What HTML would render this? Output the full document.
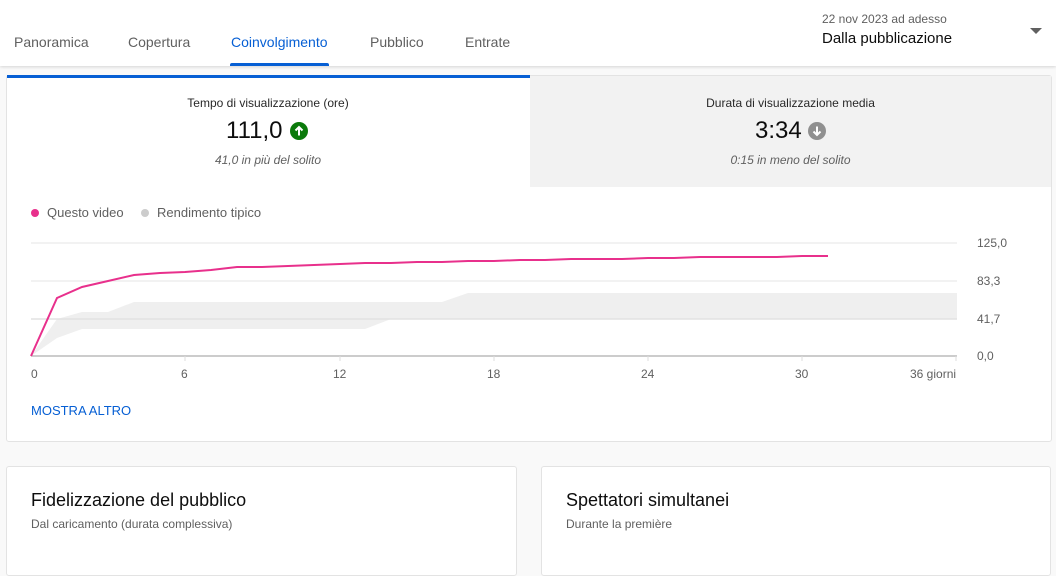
<!DOCTYPE html>
<html><head><meta charset="utf-8"><style>
*{margin:0;padding:0;box-sizing:border-box}
body{width:1056px;height:561px;background:#f9f9f9;font-family:"Liberation Sans",Roboto,sans-serif;position:relative;overflow:hidden;color:#0d0d0d}
.a{position:absolute;white-space:nowrap}
.hdr{position:absolute;left:0;top:0;width:1056px;height:66px;background:#fff;box-shadow:0 1px 3px rgba(0,0,0,.15)}
.tab{position:absolute;top:34px;font-size:14px;color:#606060}
.card{position:absolute;background:#fff;border:1px solid #e3e3e3;border-radius:3px}
</style></head><body>
<div class="hdr">
<div class="tab" style="left:14px">Panoramica</div>
<div class="tab" style="left:128px">Copertura</div>
<div class="tab" style="left:231px;color:#065fd4">Coinvolgimento</div>
<div class="tab" style="left:370px">Pubblico</div>
<div class="tab" style="left:465px">Entrate</div>
<div class="a" style="left:230px;top:63px;width:99px;height:3px;background:#065fd4;border-radius:2px 2px 0 0"></div>
<div class="a" style="left:822px;top:12px;font-size:12px;color:#606060">22 nov 2023 ad adesso</div>
<div class="a" style="left:822px;top:30px;font-size:15px;color:#0d0d0d">Dalla pubblicazione</div>
<div class="a" style="left:1030px;top:28px;width:0;height:0;border-left:6px solid transparent;border-right:6px solid transparent;border-top:6px solid #606060"></div>
</div>

<div class="card" style="left:6px;top:75px;width:1046px;height:367px"></div>
<div class="a" style="left:530px;top:76px;width:521px;height:111px;background:#f2f2f2"></div>
<div class="a" style="left:7px;top:75px;width:523px;height:3px;background:#065fd4"></div>

<div class="a" style="left:0;width:536px;top:96px;text-align:center;font-size:12px;color:#282828">Tempo di visualizzazione (ore)</div>
<div class="a" style="left:226px;top:117px;font-size:24px;color:#0d0d0d">111,0</div>
<div class="a" style="left:290px;top:122px;width:18px;height:18px;border-radius:50%;background:#0b7a0b"><svg width="18" height="18" viewBox="0 0 18 18"><path d="M9 13.5V5M5.5 8.5L9 5l3.5 3.5" stroke="#fff" stroke-width="2" fill="none"/></svg></div>
<div class="a" style="left:0;width:536px;top:153px;text-align:center;font-size:12px;font-style:italic;color:#606060">41,0 in più del solito</div>

<div class="a" style="left:530px;width:521px;top:96px;text-align:center;font-size:12px;color:#282828">Durata di visualizzazione media</div>
<div class="a" style="left:755px;top:117px;font-size:24px;color:#0d0d0d">3:34</div>
<div class="a" style="left:808px;top:122px;width:18px;height:18px;border-radius:50%;background:#909090"><svg width="18" height="18" viewBox="0 0 18 18"><path d="M9 4.5V13M5.5 9.5L9 13l3.5-3.5" stroke="#fff" stroke-width="2" fill="none"/></svg></div>
<div class="a" style="left:530px;width:521px;top:153px;text-align:center;font-size:12px;font-style:italic;color:#606060">0:15 in meno del solito</div>

<div class="a" style="left:31px;top:209px;width:8px;height:8px;border-radius:50%;background:#e8308c"></div>
<div class="a" style="left:47px;top:205px;font-size:13px;color:#606060">Questo video</div>
<div class="a" style="left:141px;top:209px;width:8px;height:8px;border-radius:50%;background:#ccc"></div>
<div class="a" style="left:157px;top:205px;font-size:13px;color:#606060">Rendimento tipico</div>

<svg class="a" style="left:0;top:0" width="1056" height="400">
<line x1="31" y1="243" x2="957" y2="243" stroke="#eee" stroke-width="1.5"/>
<line x1="31" y1="281" x2="957" y2="281" stroke="#eee" stroke-width="1.5"/>
<polygon fill="#efefef" points="31,356 57,319 82,312 108,312 134,302 442,302 468,293 957,293 957,319 391,319 365,329 82,329 57,338"/>
<line x1="31" y1="319" x2="957" y2="319" stroke="#e2e2e2" stroke-width="1.5"/>
<line x1="31" y1="356" x2="957" y2="356" stroke="#999" stroke-width="1"/>
<g stroke="#ddd"><line x1="185" y1="356" x2="185" y2="361"/><line x1="340" y1="356" x2="340" y2="361"/><line x1="494" y1="356" x2="494" y2="361"/><line x1="648" y1="356" x2="648" y2="361"/><line x1="802" y1="356" x2="802" y2="361"/><line x1="956" y1="356" x2="956" y2="361"/></g>
<polyline fill="none" stroke="#e8308c" stroke-width="2" points="31,356 57,298 82,287 108,281 134,275 160,273 185,272 211,270 237,267 262,267 288,266 340,264 365,263 391,263 417,262 442,262 468,261 494,261 520,260 545,260 571,259 622,259 648,258 674,258 700,257 777,257 802,256 828,256"/>
<g font-size="12" fill="#606060" font-family="Liberation Sans,sans-serif">
<text x="31" y="378">0</text><text x="181" y="378">6</text><text x="333" y="378">12</text><text x="487" y="378">18</text><text x="641" y="378">24</text><text x="795" y="378">30</text><text x="910" y="378">36 giorni</text>
<text x="977" y="247">125,0</text><text x="977" y="285">83,3</text><text x="977" y="323">41,7</text><text x="977" y="360">0,0</text>
</g>
</svg>
<div class="a" style="left:31px;top:403px;font-size:13px;color:#065fd4">MOSTRA ALTRO</div>

<div class="card" style="left:6px;top:466px;width:511px;height:110px"></div>
<div class="card" style="left:541px;top:466px;width:510px;height:110px"></div>
<div class="a" style="left:31px;top:490px;font-size:18px;color:#0d0d0d">Fidelizzazione del pubblico</div>
<div class="a" style="left:31px;top:517px;font-size:12px;color:#606060">Dal caricamento (durata complessiva)</div>
<div class="a" style="left:566px;top:490px;font-size:18px;color:#0d0d0d">Spettatori simultanei</div>
<div class="a" style="left:566px;top:517px;font-size:12px;color:#606060">Durante la première</div>
</body></html>
